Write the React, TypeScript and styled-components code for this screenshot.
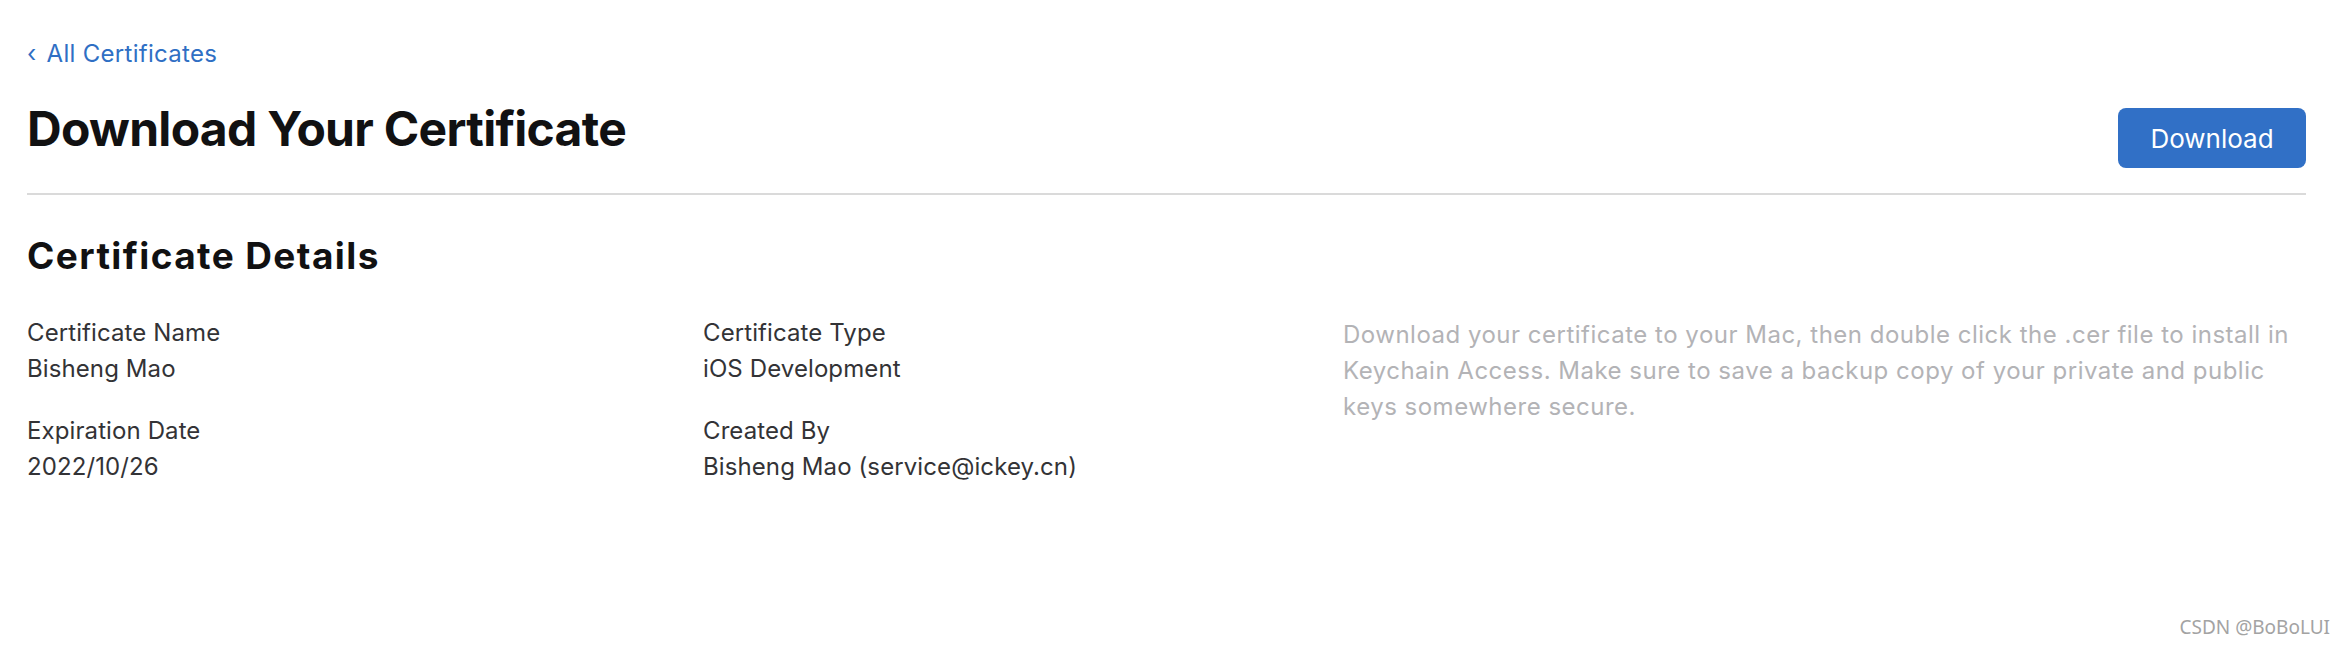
import styled, { createGlobalStyle } from 'styled-components';

const GlobalStyle = createGlobalStyle`
  html, body {
    margin: 0;
    padding: 0;
    background: #fff;
  }
  body {
    font-family: 'Inter', 'Liberation Sans', sans-serif;
    -webkit-font-smoothing: antialiased;
  }
`;

const fields = [
  [
    { label: 'Certificate Name', value: 'Bisheng Mao' },
    { label: 'Expiration Date', value: '2022/10/26' },
  ],
  [
    { label: 'Certificate Type', value: 'iOS Development' },
    { label: 'Created By', value: 'Bisheng Mao (service@ickey.cn)' },
  ],
];

export default function App() {
  return (
    <Page>
      <GlobalStyle />
      <BackLink href="#">
        <Chevron>‹</Chevron>All Certificates
      </BackLink>
      <Header>
        <Title>Download Your Certificate</Title>
        <DownloadButton type="button">Download</DownloadButton>
      </Header>
      <Divider />
      <SectionTitle>Certificate Details</SectionTitle>
      <DetailsGrid>
        {fields.map((column, i) => (
          <Column key={i}>
            {column.map((f) => (
              <Field key={f.label}>
                <Label>{f.label}</Label>
                <Value>{f.value}</Value>
              </Field>
            ))}
          </Column>
        ))}
        <Note>
          Download your certificate to your Mac, then double click the .cer file
          to install in Keychain Access. Make sure to save a backup copy of your
          private and public keys somewhere secure.
        </Note>
      </DetailsGrid>
      <Watermark>CSDN @BoBoLUI</Watermark>
    </Page>
  );
}

const Page = styled.div`
  position: relative;
  box-sizing: border-box;
  height: 648px;
  padding: 36px 40px 0 27px;
  color: #333336;
`;

const BackLink = styled.a`
  display: inline-flex;
  align-items: baseline;
  font-size: 24px;
  line-height: 36px;
  letter-spacing: 0.3px;
  color: #2f6fc4;
  text-decoration: none;
`;

const Chevron = styled.span`
  margin-right: 10px;
`;

const Header = styled.div`
  display: flex;
  justify-content: space-between;
  align-items: flex-start;
  margin-top: 28px;
`;

const Title = styled.h1`
  margin: 0;
  font-size: 48px;
  line-height: 58px;
  font-weight: 700;
  color: #111112;
  letter-spacing: -0.7px;
`;

const DownloadButton = styled.button`
  margin-top: 8px;
  width: 188px;
  height: 60px;
  border: none;
  border-radius: 8px;
  background: #3170c6;
  color: #fff;
  font-family: 'Inter', 'Liberation Sans', sans-serif;
  font-size: 26px;
  cursor: pointer;
`;

const Divider = styled.hr`
  margin: 25px 0 0;
  border: none;
  border-top: 2px solid #dadada;
`;

const SectionTitle = styled.h2`
  margin: 40px 0 0;
  font-size: 37px;
  line-height: 42px;
  font-weight: 700;
  letter-spacing: 1.4px;
  color: #111112;
`;

const DetailsGrid = styled.div`
  display: grid;
  grid-template-columns: 676px 640px 1fr;
  margin-top: 38px;
`;

const Column = styled.div`
  display: flex;
  flex-direction: column;
  gap: 26px;
`;

const Field = styled.div`
  display: flex;
  flex-direction: column;
  font-size: 24px;
  line-height: 36px;
  letter-spacing: 0.1px;
`;

const Label = styled.span`
  color: #333336;
`;

const Value = styled.span`
  color: #333336;
`;

const Note = styled.p`
  margin: 2px 0 0;
  font-size: 24px;
  line-height: 36px;
  letter-spacing: 0.5px;
  color: #b3b3b6;
`;

const Watermark = styled.span`
  position: absolute;
  right: 16px;
  bottom: 8px;
  font-family: 'Noto Sans', 'DejaVu Sans', sans-serif;
  font-size: 19px;
  color: #a3a3a3;
`;
